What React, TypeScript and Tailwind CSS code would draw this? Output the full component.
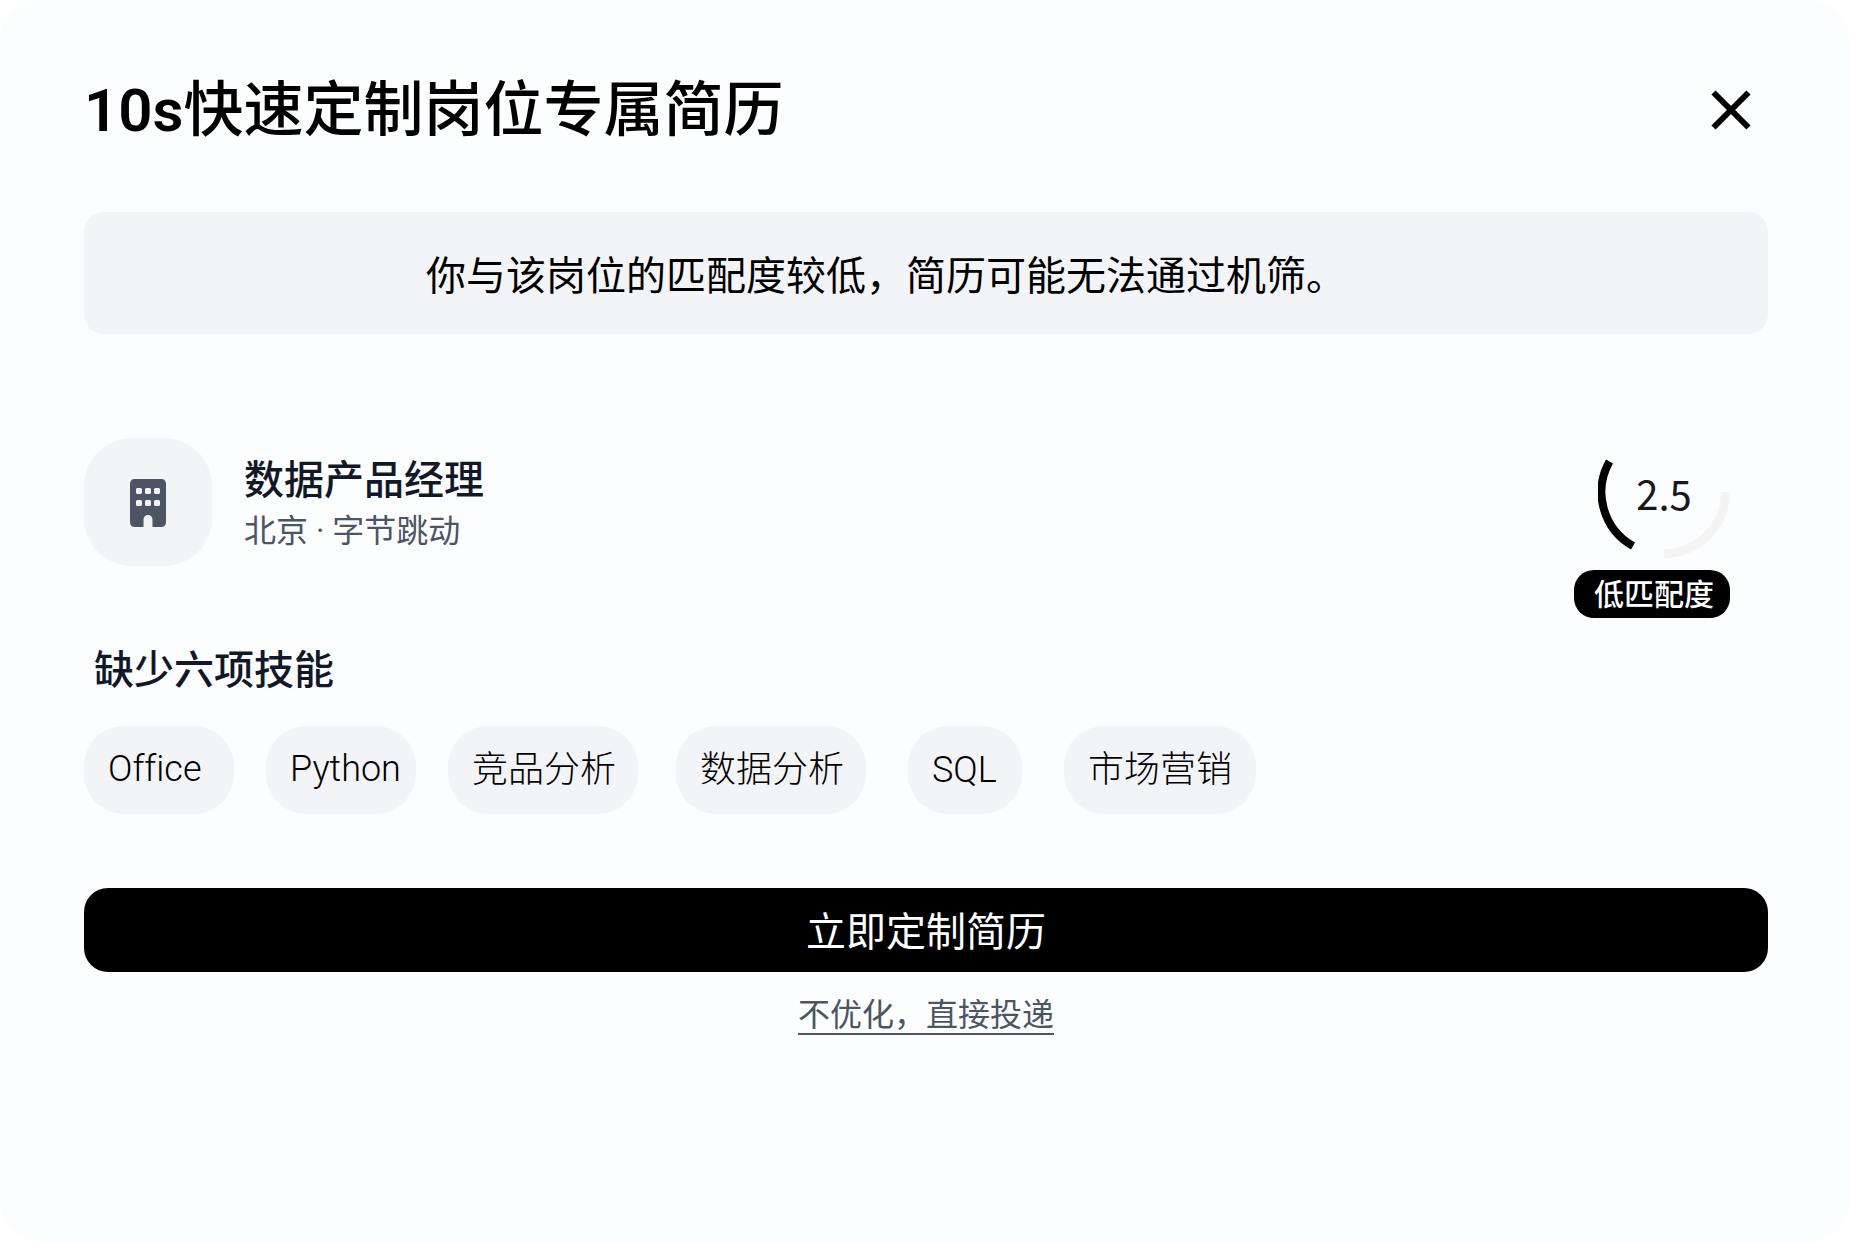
import { FaBuilding } from "react-icons/fa6";

const skills = [
  { name: "Office", box: "w-[150px] leading-[86px]" },
  { name: "Python", box: "ml-8 w-[150px] leading-[86px]" },
  { name: "竞品分析", box: "ml-8 w-[190px] leading-[88px]" },
  { name: "数据分析", box: "ml-[38px] w-[190px] leading-[88px]" },
  { name: "SQL", box: "ml-[42px] w-[114px] leading-[88px]" },
  { name: "市场营销", box: "ml-[42px] w-[192px] leading-[88px]" },
];

function ScoreGauge() {
  return (
    <div className="relative flex h-[132px] w-[132px] items-center justify-center">
      <svg viewBox="-66 -66 132 132" className="absolute inset-0" fill="none" aria-hidden="true">
        <path d="M61.5 0A61.5 61.5 0 0 1 0 61.5" stroke="#f4f4f4" strokeWidth="9" />
        <path d="M-54.5 -30.5A62 62 0 0 0 -31 54" stroke="#000" strokeWidth="8" />
      </svg>
      <span className="relative pt-0.5 text-[40px] leading-[56px] text-[#18181b]">2.5</span>
    </div>
  );
}

export default function App() {
  return (
    <div className="min-h-screen bg-white font-['Noto_Sans_CJK_SC',sans-serif] text-black">
      <main className="flex min-h-screen flex-col rounded-[40px] bg-[#fcfdff] pl-[84px] pr-[82px] pt-[69px]">
        <header className="flex items-center justify-between">
          <h1 className="font-[Roboto,'Noto_Sans_CJK_SC',sans-serif] text-[60px] font-medium leading-[84px]">
            <span className="font-semibold">10s</span>快速定制岗位专属简历
          </h1>
          <button type="button" aria-label="关闭" className="mb-0.5 mr-[17px]">
            <svg width="40" height="40" viewBox="0 0 40 40" stroke="#000" strokeWidth="6" aria-hidden="true">
              <path d="M2.5 2.5L37.5 37.5M37.5 2.5L2.5 37.5" />
            </svg>
          </button>
        </header>

        <p className="mt-[59px] rounded-[20px] bg-[#f3f4f8] py-8 pr-20 text-center text-[40px] leading-[58px]">
          你与该岗位的匹配度较低，简历可能无法通过机筛。
        </p>

        <section className="mt-[92px] flex items-start justify-between">
          <div className="mt-3 flex items-center gap-8">
            <div className="flex h-32 w-32 items-center justify-center rounded-[48px] bg-[#f3f4f6] pt-0.5">
              <FaBuilding className="h-12 w-9 text-[#4b5563]" />
            </div>
            <div>
              <h2 className="text-[40px] font-medium leading-[56px] text-[#111827]">数据产品经理</h2>
              <p className="mt-0.5 font-[Roboto,'Noto_Sans_CJK_SC',sans-serif] text-[32px] leading-[48px] text-[#4b5563]">
                北京 · 字节跳动
              </p>
            </div>
          </div>
          <div className="mr-[38px] flex flex-col items-end gap-3">
            <ScoreGauge />
            <span className="rounded-[20px] bg-black pb-1 pl-5 pr-4 text-[30px] font-medium leading-[44px] text-white">
              低匹配度
            </span>
          </div>
        </section>

        <h2 className="mt-[21px] pl-[10px] text-[40px] font-medium leading-[56px] text-[#111827]">
          缺少六项技能
        </h2>
        <ul className="mt-[31px] flex font-[Roboto,'Noto_Sans_CJK_SC',sans-serif] text-[36px] font-light [font-variant-ligatures:none]">
          {skills.map((s) => (
            <li key={s.name} className={`${s.box} h-[88px] whitespace-nowrap rounded-[40px] bg-[#f3f4f8] pl-6`}>
              {s.name}
            </li>
          ))}
        </ul>

        <button type="button" className="mt-[74px] h-[84px] rounded-3xl bg-black pb-0.5 text-[40px] leading-[82px] text-white">
          立即定制简历
        </button>
        <a
          href="#apply"
          className="mt-[19px] self-center border-b-2 border-[#4b5563] text-[32px] leading-[42px] text-[#4b5563]"
        >
          不优化，直接投递
        </a>
      </main>
    </div>
  );
}
